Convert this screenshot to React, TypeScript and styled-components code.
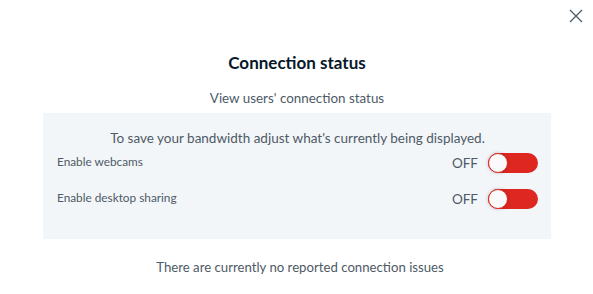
import React from 'react'
import styled, { createGlobalStyle } from 'styled-components'

const GlobalStyle = createGlobalStyle`
  html, body {
    margin: 0;
    padding: 0;
    background: #ffffff;
  }
  body {
    font-family: Lato, "Open Sans", "Liberation Sans", sans-serif;
  }
`

const Modal = styled.div`
  position: relative;
  width: 593px;
  height: 294px;
  box-sizing: border-box;
  padding: 52px 42px 0 43px;
  display: flex;
  flex-direction: column;
  align-items: stretch;
  background: #ffffff;
`

const CloseButton = styled.button`
  position: absolute;
  top: 9px;
  right: 10px;
  width: 14px;
  height: 14px;
  padding: 0;
  border: 0;
  background: transparent;
  display: flex;
  cursor: pointer;
`

const Title = styled.h2`
  margin: 0;
  text-align: center;
  font-size: 17px;
  line-height: 22px;
  font-weight: 700;
  color: #06172a;
`

const Subtitle = styled.p`
  margin: 15px 0 0;
  text-align: center;
  font-size: 13.4px;
  line-height: 18px;
  color: #4e5a66;
`

const Panel = styled.section`
  margin-top: 6px;
  height: 126px;
  box-sizing: border-box;
  padding: 15px 13px 0 14px;
  background: #f3f6f9;
  display: flex;
  flex-direction: column;
`

const Description = styled.p`
  margin: 0 0 -3px;
  text-align: center;
  font-size: 13.5px;
  line-height: 20px;
  color: #4e5a66;
`

const Row = styled.div`
  display: flex;
  align-items: center;
  justify-content: space-between;
  height: 36px;
`

const RowLabel = styled.span`
  font-size: 11.8px;
  color: #4e5a66;
  margin-top: -4px;
`

const ToggleGroup = styled.div`
  display: flex;
  align-items: center;
  gap: 10px;
`

const ToggleText = styled.span`
  font-size: 13.5px;
  color: #4e5a66;
`

const Track = styled.span<{ $on: boolean }>`
  position: relative;
  width: 50px;
  height: 20px;
  border-radius: 10px;
  background: ${(p) => (p.$on ? '#0f70d7' : '#df2721')};
  display: inline-block;
`

const Knob = styled.span<{ $on: boolean }>`
  position: absolute;
  top: 0;
  left: ${(p) => (p.$on ? '30px' : '0')};
  width: 20px;
  height: 20px;
  box-sizing: border-box;
  border-radius: 50%;
  background: #fafafa;
  border: 1px solid #df2721;
  box-shadow: 0 0 3px 1px rgba(0, 0, 0, 0.12);
`

const Footer = styled.p`
  margin: 19px 0 0;
  padding-left: 6px;
  text-align: center;
  font-size: 13.2px;
  line-height: 18px;
  color: #4e5a66;
`

function Toggle({ on }: { on: boolean }) {
  return (
    <ToggleGroup>
      <ToggleText>{on ? 'ON' : 'OFF'}</ToggleText>
      <Track $on={on}>
        <Knob $on={on} />
      </Track>
    </ToggleGroup>
  )
}

export default function App() {
  return (
    <>
      <GlobalStyle />
      <Modal>
        <CloseButton aria-label="Close">
          <svg width="14" height="14" viewBox="0 0 14 14">
            <path d="M1 1 L13 13 M13 1 L1 13" stroke="#4e5a66" strokeWidth="1.3" fill="none" />
          </svg>
        </CloseButton>
        <Title>Connection status</Title>
        <Subtitle>View users' connection status</Subtitle>
        <Panel>
          <Description>To save your bandwidth adjust what's currently being displayed.</Description>
          <Row>
            <RowLabel>Enable webcams</RowLabel>
            <Toggle on={false} />
          </Row>
          <Row>
            <RowLabel>Enable desktop sharing</RowLabel>
            <Toggle on={false} />
          </Row>
        </Panel>
        <Footer>There are currently no reported connection issues</Footer>
      </Modal>
    </>
  )
}
